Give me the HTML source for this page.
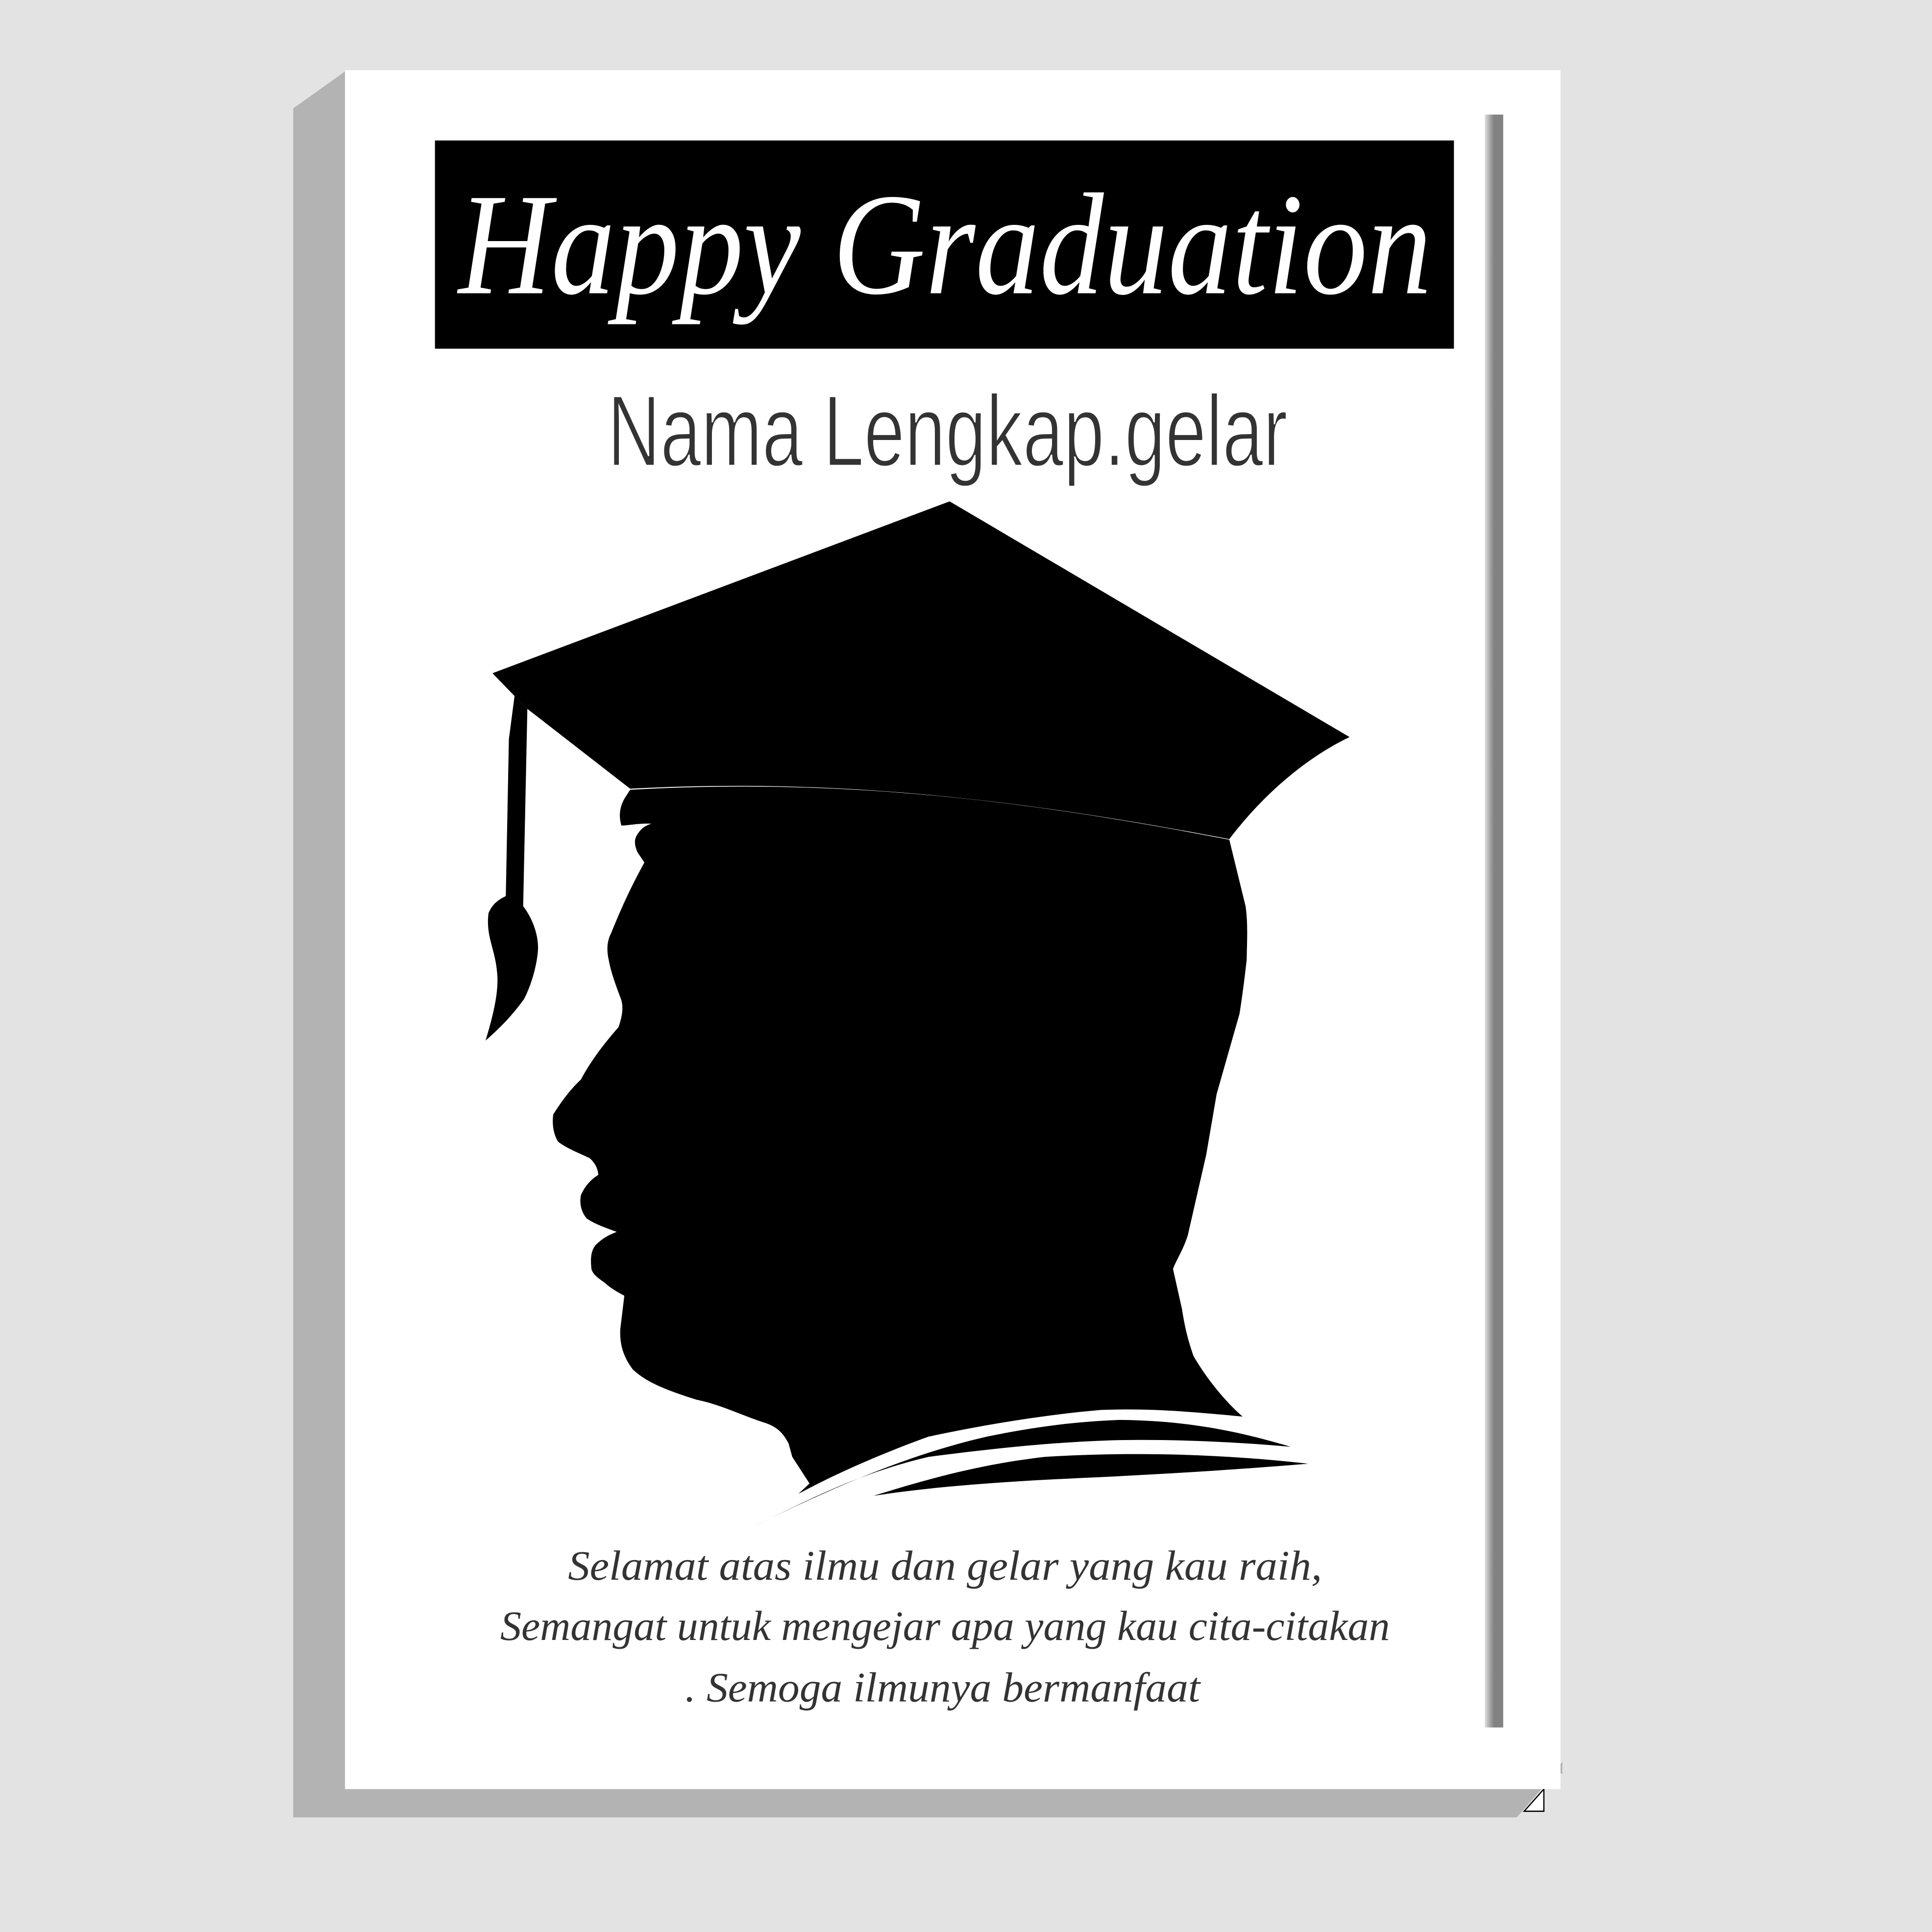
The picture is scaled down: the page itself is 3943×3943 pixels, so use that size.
<!DOCTYPE html>
<html><head><meta charset="utf-8"><style>
html,body{margin:0;padding:0;background:#e3e3e3;}
svg{display:block;}
</style></head><body>
<svg width="3943" height="3943" viewBox="0 0 1568 1568" xmlns="http://www.w3.org/2000/svg">
<defs>
<linearGradient id="bar" x1="0" x2="1" y1="0" y2="0">
<stop offset="0" stop-color="#e0e0e0"/><stop offset="0.35" stop-color="#9a9a9a"/><stop offset="0.5" stop-color="#828282"/><stop offset="1" stop-color="#828282"/>
</linearGradient>
</defs>
<rect width="1568" height="1568" fill="#e3e3e3"/>
<polygon points="280,58 238,88 238,1475 1231,1475 1251,1452 280,1452" fill="#b3b3b3"/>
<polygon points="1253,1452 1253,1470 1237,1470" fill="#fff" stroke="#000" stroke-width="1"/>
<polygon points="1262,1436 1268,1430 1268,1440" fill="#b3b3b3"/>
<rect x="280" y="57" width="986.5" height="1395" fill="#fff"/>
<rect x="1205" y="93" width="15" height="1309" fill="url(#bar)"/>
<rect x="353" y="114" width="827" height="169" fill="#000"/>
<text x="767" y="238" text-anchor="middle" font-family="Liberation Serif, serif" font-style="italic" font-size="118" fill="#fff" textLength="790" lengthAdjust="spacingAndGlyphs">Happy Graduation</text>
<text x="769" y="378" text-anchor="middle" font-family="Liberation Sans, sans-serif" font-size="82" fill="#333" stroke="#fff" stroke-width="1.5" paint-order="fill" textLength="552" lengthAdjust="spacingAndGlyphs">Nama Lengkap.gelar</text>
<path d="M399.7,546.4 L770.7,406.9 L1095.3,598.2 C1060,615 1025,645 997.7,681 C860,655 700,630 511.4,640.1 L428,575.3 L417.6,564.9 Z" fill="#000"/>
<path d="M417.6,564.9 L428,575.3 L424.6,735.5 C432,745 438,760 436.4,773.7 C434,795 425,812 424.6,811.8 C415,825 405,835 394.1,844.5 C400,825 405,805 403.5,790 C402,770 394,760 396.5,741 C400,733 405,730 410.5,727.3 L413,600 Z" fill="#000"/>
<path d="M511.4,641 C700,630 860,655 997.7,681.5 L1010.9,735.5 C1013,750 1012,765 1011.8,779 C1010,795 1008,810 1006,822.7 L987.4,888 L979,937 L964,1002.6 C960,1015 955,1022 952,1029.8 L959.3,1062.5 C962,1080 965,1090 968.7,1100.7 C980,1120 995,1138 1008.5,1149.7 C960,1145 930,1143 893.6,1144.3 C850,1148 800,1156 753.5,1166 C720,1178 680,1195 648,1212.4 L657,1204 L643,1182.4 L640,1171.5 C635,1162 630,1158 621.6,1155 C600,1148 585,1140 565.3,1136 C540,1128 525,1122 513.7,1111.6 C505,1100 503,1090 503.4,1078.9 L506.7,1051.6 C500,1048 495,1045 490.3,1040.7 C485,1037 481,1034 480,1029.8 C479,1020 480,1015 483.2,1010.7 C490,1004 495,1002 500.6,999.8 C490,996 482,993 476.2,988.9 C472,984 470,977 471.5,969.9 C475,962 480,957 485.6,953.5 C485,947 482,943 478.5,939.9 C468,935 458,931 452.7,926.3 C449,920 448,912 449,904.5 C455,895 462,885 471.5,876.1 C480,860 492,845 502,833.6 C505,825 506,818 504.3,811.8 C500,800 496,790 494,779 C492,770 493,763 496,757.3 C505,735 513,718 523,700 L517.5,691.9 C514,684 515,680 518.4,675.6 C521,672 524,670 528.7,668.5 C518,668 510,670 504.3,670 C502,662 503,655 506.7,648.3 Z" fill="#000"/>
<path d="M610.3,1239.6 C680,1205 740,1180 800.7,1166 C840,1158 870,1154 908.7,1152.4 C960,1153 1000,1160 1047.5,1174.2 C1000,1170 950,1168 908.7,1168.8 C860,1170 810,1175 753.5,1182.4 C700,1195 660,1215 610.3,1239.6 Z" fill="#000"/>
<path d="M709,1214 C760,1198 800,1188 847.7,1182.4 C920,1178 990,1180 1061.7,1187.9 C1000,1193 950,1196 893.6,1198.8 C820,1202 760,1206 709,1214 Z" fill="#000"/>
<g font-family="Liberation Serif, serif" font-style="italic" font-size="34" fill="#333" text-anchor="middle">
<text x="767" y="1282" textLength="612" lengthAdjust="spacingAndGlyphs">Selamat atas ilmu dan gelar yang kau raih,</text>
<text x="767" y="1331" textLength="722" lengthAdjust="spacingAndGlyphs">Semangat untuk mengejar apa yang kau cita-citakan</text>
<text x="765" y="1381" textLength="418" lengthAdjust="spacingAndGlyphs">. Semoga ilmunya bermanfaat</text>
</g>
</svg>
</body></html>
